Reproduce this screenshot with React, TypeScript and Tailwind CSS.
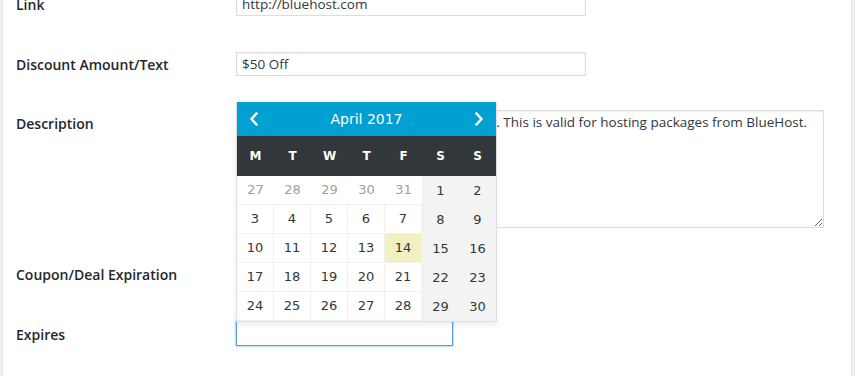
import React from 'react';

const WEEKDAYS = ['M', 'T', 'W', 'T', 'F', 'S', 'S'];

interface DayCell {
  day: number;
  otherMonth?: boolean;
  today?: boolean;
}

const WEEKS: DayCell[][] = [
  [{ day: 27, otherMonth: true }, { day: 28, otherMonth: true }, { day: 29, otherMonth: true }, { day: 30, otherMonth: true }, { day: 31, otherMonth: true }, { day: 1 }, { day: 2 }],
  [3, 4, 5, 6, 7, 8, 9].map((d) => ({ day: d })),
  [10, 11, 12, 13, 14, 15, 16].map((d) => ({ day: d, today: d === 14 })),
  [17, 18, 19, 20, 21, 22, 23].map((d) => ({ day: d })),
  [24, 25, 26, 27, 28, 29, 30].map((d) => ({ day: d })),
];

const labelCls = "pt-[4px] text-[14px] leading-[18px] font-semibold text-[#23282d]";
const inputCls =
  "h-[24px] border border-[#dddddd] bg-white px-[5px] text-[13.5px] text-[#32373c] shadow-[inset_0_1px_2px_rgba(0,0,0,0.07)] outline-none";

function Chevron({ dir }: { dir: 'left' | 'right' }) {
  return (
    <svg width="10" height="14" viewBox="0 0 10 14" fill="none">
      <polyline
        points={dir === 'left' ? '7.5,1.5 2.5,7 7.5,12.5' : '2.5,1.5 7.5,7 2.5,12.5'}
        stroke="#fff"
        strokeWidth="2.4"
        strokeLinecap="square"
      />
    </svg>
  );
}

function DatePicker() {
  return (
    <div className="absolute left-[233px] top-[102px] w-[261px] border border-t-0 border-[#dfdfdf] bg-white shadow-[0_3px_6px_rgba(0,0,0,0.075)] font-['DejaVu_Sans',sans-serif]">
      {/* 헤더 */}
      <div className="flex h-[34px] items-center justify-between bg-[#00a0d2] pl-[12px] pr-[12px] text-white">
        <Chevron dir="left" />
        <span className="text-[14px]">April 2017</span>
        <Chevron dir="right" />
      </div>

      {/* 요일 */}
      <div className="grid h-[40px] grid-cols-7 items-center bg-[#32373c] text-center text-[12px] font-bold text-white">
        {WEEKDAYS.map((w, i) => (
          <span key={i}>{w}</span>
        ))}
      </div>

      {/* 날짜 */}
      <div className="grid grid-cols-[repeat(7,37px)]">
        {WEEKS.map((week, wi) =>
          week.map((cell, ci) => {
            const weekend = ci >= 5;
            return (
              <div
                key={`${wi}-${ci}`}
                className={[
                  'flex h-[29px] items-center justify-center text-[13px]',
                  weekend
                    ? 'bg-[#f3f3f3] text-[#32373c]'
                    : cell.otherMonth
                      ? 'border-b border-[#f0f0f0] text-[#a0a0a0]'
                      : cell.today
                        ? 'border-b border-r border-[#f0f0f0] bg-[#f0f0c0] text-[#32373c]'
                        : 'border-b border-r border-[#f0f0f0] text-[#32373c]',
                ].join(' ')}
              >
                {cell.day}
              </div>
            );
          })
        )}
      </div>
    </div>
  );
}

export default function App() {
  return (
    <div className="h-screen overflow-hidden bg-[#f1f1f1]">
      <div className="relative ml-[2px] flex h-full w-[850px] flex-col border-x border-[#e5e5e5] bg-white pl-[13px] font-['Open_Sans',sans-serif]">
        <div className="-mt-[8px] grid grid-cols-[220px_1fr] items-start">
          <label className={labelCls}>Link</label>
          <input className={`${inputCls} w-[350px]`} defaultValue="http://bluehost.com" />
        </div>

        <div className="mt-[36px] grid grid-cols-[220px_1fr] items-start">
          <label className={labelCls}>Discount Amount/Text</label>
          <input className={`${inputCls} w-[350px]`} defaultValue="$50 Off" />
        </div>

        <div className="mt-[34px] grid grid-cols-[220px_1fr] items-start">
          <label className="pt-[5px] text-[14px] leading-[18px] font-semibold text-[#23282d]">Description</label>
          <textarea
            className="h-[118px] w-[588px] border border-[#dddddd] px-[5px] py-[1px] text-[13.5px] leading-[20px] text-[#32373c] shadow-[inset_0_1px_2px_rgba(0,0,0,0.07)] outline-none"
            defaultValue="Get $50 off your purchase at     BlueHost. This is valid for hosting packages from BlueHost."
          />
        </div>

        <div className="mt-[38px] grid grid-cols-[220px_1fr]">
          <label className="text-[14px] leading-[18px] font-semibold text-[#23282d]">Coupon/Deal Expiration</label>
        </div>

        <div className="mt-[36px] grid grid-cols-[220px_1fr] items-start">
          <label className="pt-[6px] text-[14px] leading-[18px] font-semibold text-[#23282d]">Expires</label>
          <input className="h-[26px] w-[217px] border border-[#5b9dd9] bg-white px-[5px] text-[14px] shadow-[0_0_2px_rgba(30,140,190,0.8)] outline-none" />
        </div>

        <DatePicker />
      </div>
    </div>
  );
}
